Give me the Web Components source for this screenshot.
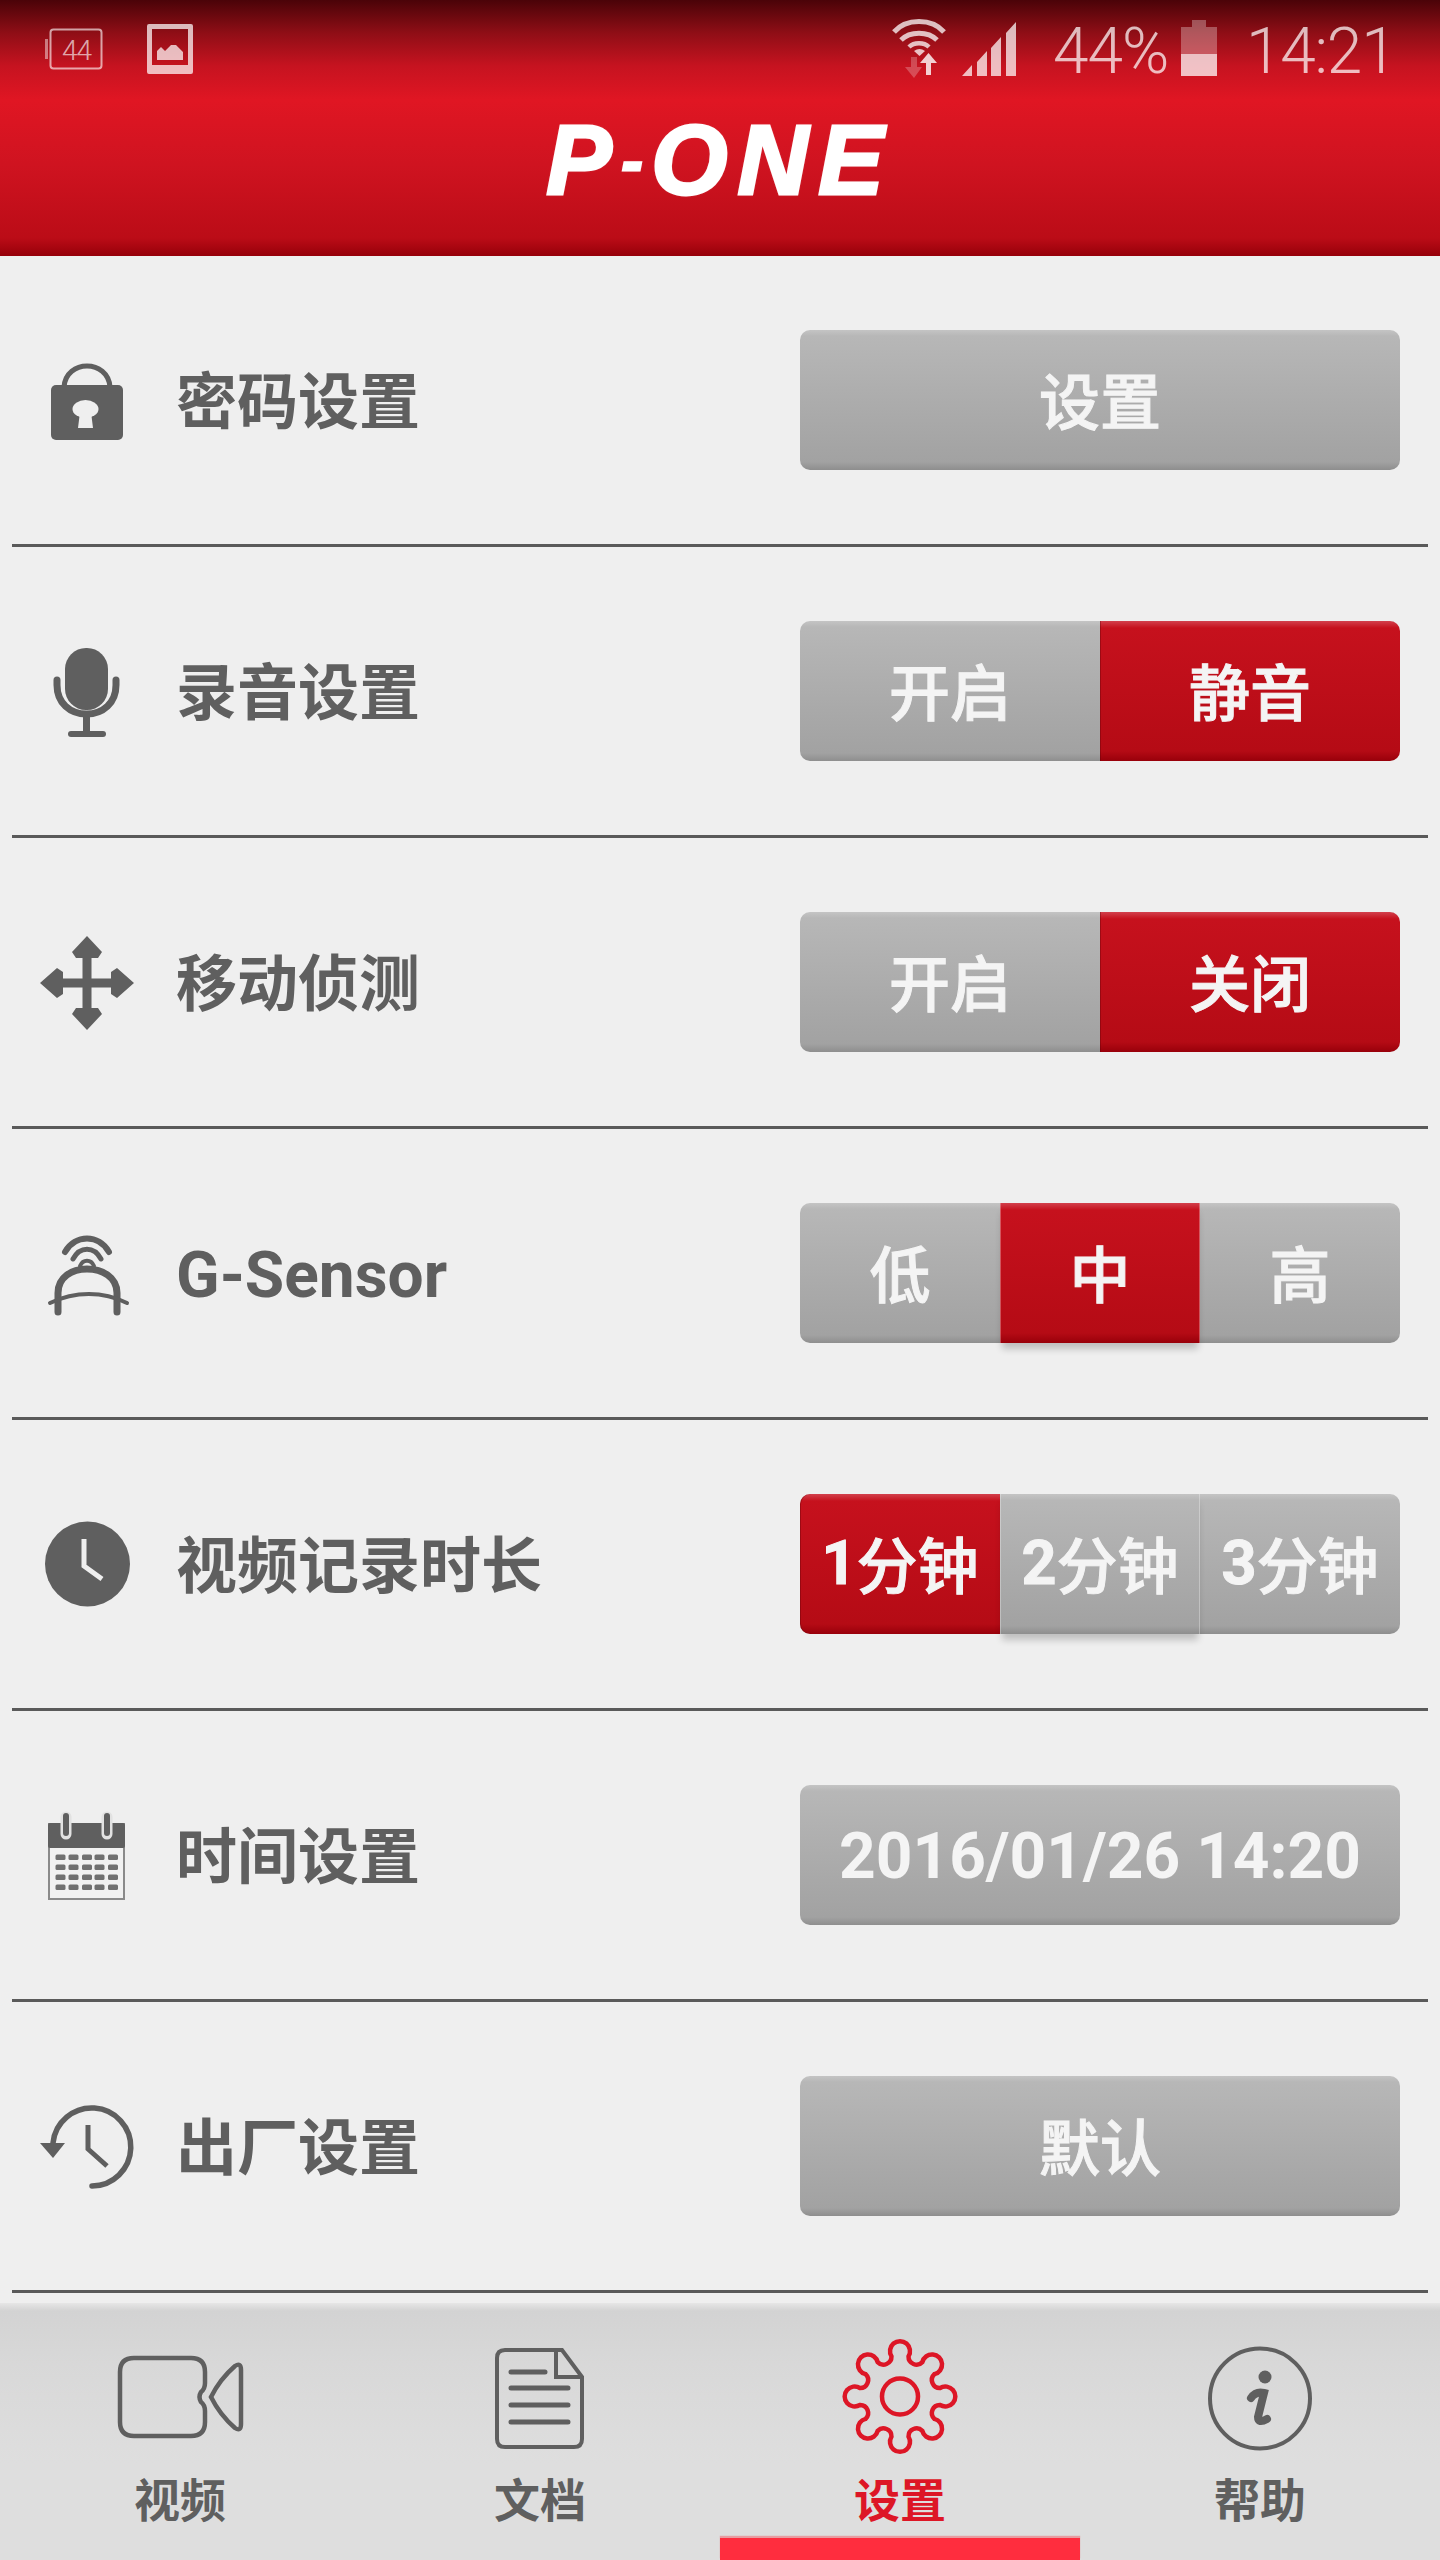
<!DOCTYPE html>
<html lang="zh">
<head>
<meta charset="utf-8">
<title>P-ONE</title>
<style>
  html, body { margin: 0; padding: 0; background: #efefef; }
</style>
</head>
<body>
<p-app>
  <p-header slot="header"></p-header>
  <setting-row slot="rows" icon="lock">
    <span slot="label">密码设置</span>
    <seg-control slot="control"><seg-btn plain>设置</seg-btn></seg-control>
  </setting-row>
  <setting-row slot="rows" icon="mic">
    <span slot="label">录音设置</span>
    <seg-control slot="control"><seg-btn>开启</seg-btn><seg-btn on>静音</seg-btn></seg-control>
  </setting-row>
  <setting-row slot="rows" icon="move">
    <span slot="label">移动侦测</span>
    <seg-control slot="control"><seg-btn>开启</seg-btn><seg-btn on>关闭</seg-btn></seg-control>
  </setting-row>
  <setting-row slot="rows" icon="gsensor">
    <span slot="label" class="latin">G-Sensor</span>
    <seg-control slot="control"><seg-btn>低</seg-btn><seg-btn on raised>中</seg-btn><seg-btn>高</seg-btn></seg-control>
  </setting-row>
  <setting-row slot="rows" icon="clock">
    <span slot="label">视频记录时长</span>
    <seg-control slot="control"><seg-btn on><b>1</b>分钟</seg-btn><seg-btn raised><b>2</b>分钟</seg-btn><seg-btn><b>3</b>分钟</seg-btn></seg-control>
  </setting-row>
  <setting-row slot="rows" icon="calendar">
    <span slot="label">时间设置</span>
    <seg-control slot="control"><seg-btn plain big>2016/01/26 14:20</seg-btn></seg-control>
  </setting-row>
  <setting-row slot="rows" icon="history">
    <span slot="label">出厂设置</span>
    <seg-control slot="control"><seg-btn plain>默认</seg-btn></seg-control>
  </setting-row>
  <tab-bar slot="tabs">
    <tab-item icon="video">视频</tab-item>
    <tab-item icon="doc">文档</tab-item>
    <tab-item icon="gear" active>设置</tab-item>
    <tab-item icon="info">帮助</tab-item>
  </tab-bar>
</p-app>

<script>
'use strict'
const FONT = `Roboto, "Noto Sans CJK SC", sans-serif`
const GREY = '#5f5f5f'
const BG = '#efefef'
const RED = '#dd1626'

// 8 lobes, arcs out and back in around the centre
function gearPath(cx, cy){
    const r = 41, half = 12
    const pt = deg => {
        const a = (deg - 90) * Math.PI / 180
        return (cx + r * Math.cos(a)).toFixed(2) + ' ' + (cy + r * Math.sin(a)).toFixed(2)
    }
    let d = 'M' + pt(-half)
    for(let i = 0; i < 8; i++){
        const a = i * 45
        d += ' A10 10 0 1 1 ' + pt(a + half)
        d += ' A8 8 0 0 0 ' + pt(a + 45 - half)
    }
    return d + ' Z'
}

function calendarCells(){
    let out = ''
    for(const y of [69.500, 79.500, 89.500, 99.500]){
        for(const x of [55.500, 68.500, 82, 94.500, 108]){
            out += `<rect x="${x}" y="${y}" width="10" height="5.500" rx="1.500"/>`
        }
    }
    return out
}

const ROW_ICONS = {
    lock: `<path d="M64 57C66 29 108 29 110 57" fill="none" stroke="${GREY}" stroke-width="5"/>
        <rect x="51" y="55" width="72" height="55" rx="5" fill="${GREY}"/>
        <ellipse cx="85.500" cy="79" rx="13" ry="9" fill="${BG}"/>
        <path d="M80 82H91L93 98H78Z" fill="${BG}"/>`,
    mic: `<rect x="65" y="27" width="43" height="62" rx="21" fill="${GREY}"/>
        <path d="M57 59V64C57 82 70 93 86.500 93C103 93 116 82 116 64V59M86.500 93V112" fill="none" stroke="${GREY}" stroke-width="7" stroke-linecap="round"/>
        <rect x="68" y="110" width="38" height="6" rx="3" fill="${GREY}"/>`,
    move: `<path d="M87 40V102M58 71H116" stroke="${GREY}" stroke-width="9"/>
        <path d="M87 24L102 40L98 46H76L72 40ZM87 118L102 102L98 96H76L72 102ZM40 71L57 56L63 60V82L57 86ZM134 71L117 56L111 60V82L117 86Z" fill="${GREY}"/>`,
    gsensor: `<g fill="none" stroke="${GREY}" stroke-linecap="round">
        <path d="M65 49C75 31 99 31 109 49" stroke-width="6"/>
        <path d="M73 56C80 43 94 43 101 56" stroke-width="5"/>
        <path d="M80 63C83 56 91 56 94 63" stroke-width="4"/>
        <path d="M58 109V90C58 74 72 66 87 66C102 66 117 74 117 90V109" stroke-width="7"/>
        <path d="M50 100C75 88 103 88 127 100" stroke-width="4"/></g>`,
    clock: `<circle cx="87.500" cy="70" r="42.500" fill="${GREY}"/>
        <path d="M84 45V72L102 85" fill="none" stroke="${BG}" stroke-width="5"/>`,
    calendar: `<rect x="49" y="39" width="75" height="75" fill="#f1f1f1" stroke="#8a8a8a" stroke-width="2"/>
        <rect x="48" y="38" width="77" height="25" rx="2" fill="${GREY}"/>
        <path d="M66 32V49M107 32V49" stroke="#e2e2e2" stroke-width="11" stroke-linecap="round"/>
        <path d="M66 31V48M107 31V48" stroke="${GREY}" stroke-width="6" stroke-linecap="round"/>
        <g fill="#707070">${calendarCells()}</g>`,
    history: `<path d="M92 110A39 39 0 1 0 53 67" fill="none" stroke="${GREY}" stroke-width="5.500" stroke-linecap="round"/>
        <path d="M40 67H65L53 82Z" fill="${GREY}"/>
        <path d="M88 49V73L107 90" fill="none" stroke="${GREY}" stroke-width="5"/>`
}

const TAB_ICONS = {
    video: `<g fill="none" stroke="currentColor" stroke-width="4.500">
        <path d="M24 23H81Q95 23 95 37V48Q95 54 91 57Q88 62 91 67Q95 70 95 76V87Q95 101 81 101H24Q10 101 10 87V37Q10 23 24 23Z"/>
        <path d="M101 62Q110 44 125 31Q131 27 131 35V89Q131 97 125 93Q110 80 101 62Z"/></g>`,
    doc: `<g fill="none" stroke="currentColor" stroke-width="4">
        <path d="M35 15H92L112 42V104Q112 112 104 112H35Q27 112 27 104V23Q27 15 35 15Z"/>
        <path d="M86 16V42H112"/>
        <path d="M41 37H75M41 53H98M41 70H98M41 87H98" stroke-width="5" stroke-linecap="round"/></g>`,
    gear: `<g fill="none" stroke="currentColor" stroke-width="4.500">
        <path d="${gearPath(70, 61.5)}"/><circle cx="70" cy="61.500" r="18"/></g>`,
    info: `<circle cx="70" cy="63.500" r="50" fill="none" stroke="currentColor" stroke-width="4"/>
        <circle cx="75" cy="42" r="6.500" fill="currentColor"/>
        <path d="M61 63Q66 56 74 58L68 82Q68 89 77 84" fill="none" stroke="currentColor" stroke-width="8" stroke-linecap="round"/>`
}

class PApp extends HTMLElement {
    constructor(){
        super()
        this.attachShadow({mode:'open'})
        this.shadowRoot.innerHTML = `
        <style>
            :host { display:flex; flex-direction:column; width:1440px; height:2560px; overflow:hidden; background:${BG}; font-family:${FONT}; }
            .rows { display:flex; flex-direction:column; }
            .tabs { margin-top:10px; }
        </style>
        <slot name="header"></slot>
        <div class="rows"><slot name="rows"></slot></div>
        <div class="tabs"><slot name="tabs"></slot></div>`
    }
}

class PHeader extends HTMLElement {
    constructor(){
        super()
        this.attachShadow({mode:'open'})
        const dim = 'rgba(255,255,255,.72)'
        this.shadowRoot.innerHTML = `
        <style>
            :host { display:block; height:256px; background:linear-gradient(180deg,#4a0308 0,#8f0e16 33px,#c61320 66px,#e01623 100px,#cf1320 165px,#bb0c17 238px,#960009 256px); color:#fff; }
            .status { display:flex; height:90px; color:${dim}; font-family:Roboto, sans-serif; font-weight:300; font-size:64px; }
            .status svg { display:block; height:90px; flex:none; }
            .status span { display:block; line-height:90px; padding-top:7px; height:83px; white-space:nowrap; }
            .pct { width:115px; letter-spacing:-1px; }
            .time { width:142px; letter-spacing:-1.2px; margin-left:-2px; margin-right:52px; }
            .grow { flex:1; }
            .logo { height:166px; display:flex; justify-content:center; font:italic 700 98px/1 "Liberation Sans", sans-serif; letter-spacing:10px; padding-top:21px; box-sizing:border-box; -webkit-text-stroke:3px #fff; text-shadow:0 0 3px rgba(255,255,255,.45); }
            .logo b { font-size:62px; font-weight:700; letter-spacing:9px; align-self:flex-start; line-height:100px; }
        </style>
        <div class="status">
            <svg viewBox="0 0 200 90" width="200" fill="${dim}">
                <rect x="50.500" y="29.500" width="51" height="39" rx="3" fill="none" stroke="rgba(255,255,255,.62)" stroke-width="2"/>
                <rect x="45" y="39" width="3" height="20" fill="rgba(255,255,255,.45)"/>
                <text x="76.500" y="60" text-anchor="middle" font-family="Roboto" font-weight="300" font-size="28" letter-spacing="-1" fill="rgba(255,255,255,.65)">44</text>
                <path fill-rule="evenodd" d="M149 24H191Q193 24 193 26V72Q193 74 191 74H149Q147 74 147 72V26Q147 24 149 24ZM152 29V65H188V29Z"/>
                <path d="M157 60V51L161 47L165 51L171 45L176 45L183 52V60Z"/>
            </svg>
            <div class="grow"></div>
            <svg viewBox="885 0 168 90" width="168">
                <g fill="none" stroke="rgba(255,255,255,.74)">
                    <path d="M894 32C906 18 932 18 944 32" stroke-width="5"/>
                    <path d="M901 40C910 31 928 31 937 40" stroke-width="5"/>
                    <path d="M909 47C914 42 924 42 929 47" stroke-width="4.500"/>
                </g>
                <path d="M914 51Q919.500 47 925 51L919.500 56Z" fill="rgba(255,255,255,.74)"/>
                <path d="M911 57H917V67H922L914 78L905 67H911Z" fill="rgba(255,255,255,.24)"/>
                <path d="M928.500 53L937 63H931V75H926V63H920Z" fill="rgba(255,255,255,.8)"/>
                <path d="M962 76L972 65V76ZM977 62L987 51V76H977ZM991 48L1001 37V76H991ZM1006 33L1016 22V76H1006Z" fill="${dim}"/>
            </svg>
            <span class="pct">44%</span>
            <svg viewBox="1168 0 80 90" width="80">
                <path d="M1192 20H1206V27H1217V54H1181V27H1192Z" fill="rgba(255,255,255,.3)"/>
                <rect x="1181" y="54" width="36" height="22" fill="rgba(255,255,255,.74)"/>
            </svg>
            <span class="time">14:21</span>
        </div>
        <div class="logo">P<b>-</b>ONE</div>`
    }
}

class SettingRow extends HTMLElement {
    constructor(){
        super()
        this.attachShadow({mode:'open'})
        const icon = ROW_ICONS[this.getAttribute('icon')] || ''
        this.shadowRoot.innerHTML = `
        <style>
            :host { display:flex; align-items:center; height:291px; box-sizing:border-box; margin:0 12px; padding:74px 28px 74px 0; border-bottom:3px solid #5a5a5a; }
            svg { display:block; flex:none; width:164px; height:140px; filter:blur(.5px); }
            .label { flex:1; color:${GREY}; font-size:61px; font-weight:700; line-height:134px; padding-top:6px; white-space:nowrap; }
            ::slotted(.latin) { font-size:64px; }
        </style>
        <svg viewBox="12 0 164 140">${icon}</svg>
        <div class="label"><slot name="label"></slot></div>
        <slot name="control"></slot>`
    }
}

class SegControl extends HTMLElement {
    constructor(){
        super()
        this.attachShadow({mode:'open'})
        this.shadowRoot.innerHTML = `
        <style>
            :host { display:flex; width:600px; height:140px; flex:none; }
            ::slotted(seg-btn:first-child) { border-radius:10px 0 0 10px; }
            ::slotted(seg-btn:last-child) { border-radius:0 10px 10px 0; }
            ::slotted(seg-btn:only-child) { border-radius:10px; }
        </style>
        <slot></slot>`
    }
}

class SegBtn extends HTMLElement {
    constructor(){
        super()
        this.attachShadow({mode:'open'})
        this.shadowRoot.innerHTML = `
        <style>
            :host { flex:1 1 0; display:flex; align-items:center; justify-content:center; box-sizing:border-box; height:140px; padding-bottom:3px; color:#f4f4f4; font-family:${FONT}; font-size:61px; font-weight:500; -webkit-text-stroke:1px #f4f4f4; white-space:nowrap;
                background:linear-gradient(180deg,#c4c4c4 0,#b7b7b7 6px,#a2a2a2 132px,#8e8e8e 140px); }
            :host([on]) { background:linear-gradient(180deg,#d2404c 0,#c6111d 7px,#b50b15 130px,#98000a 140px); box-shadow:inset 1px 0 0 rgba(90,0,5,.35); }
            :host([raised]) { position:relative; box-shadow:0 8px 7px -2px rgba(0,0,0,.2), inset 1px 0 0 rgba(255,255,255,.3), inset -1px 0 0 rgba(255,255,255,.3); }
            :host([big]) { font-size:64px; font-weight:700; -webkit-text-stroke:0; padding-bottom:0; padding-top:2px; }
        </style>
        <slot></slot>`
    }
}

class TabBar extends HTMLElement {
    constructor(){
        super()
        this.attachShadow({mode:'open'})
        this.shadowRoot.innerHTML = `
        <style>
            :host { display:flex; height:257px; background:linear-gradient(180deg,#e6e6e6 0,#d3d3d3 8px,#d8d8d8 60px,#dedede 160px,#dedede 257px); }
        </style>
        <slot></slot>`
    }
}

class TabItem extends HTMLElement {
    constructor(){
        super()
        this.attachShadow({mode:'open'})
        const icon = TAB_ICONS[this.getAttribute('icon')] || ''
        this.shadowRoot.innerHTML = `
        <style>
            :host { flex:1 1 0; display:flex; flex-direction:column; align-items:center; padding-top:32px; box-sizing:border-box; color:${GREY}; font-family:${FONT}; font-size:46px; font-weight:700; }
            :host([active]) { color:${RED}; }
            svg { display:block; width:140px; height:130px; flex:none; filter:blur(.4px); }
            .name { line-height:68px; padding-top:2px; }
            .bar { margin-top:auto; align-self:stretch; height:22px; }
            :host([active]) .bar { background:#ff2d3e; box-shadow:0 -2px 1px rgba(240,90,100,.5); }
        </style>
        <svg viewBox="0 0 140 130">${icon}</svg>
        <div class="name"><slot></slot></div>
        <div class="bar"></div>`
    }
}

window.customElements.define('p-app', PApp)
window.customElements.define('p-header', PHeader)
window.customElements.define('setting-row', SettingRow)
window.customElements.define('seg-control', SegControl)
window.customElements.define('seg-btn', SegBtn)
window.customElements.define('tab-bar', TabBar)
window.customElements.define('tab-item', TabItem)
</script>
</body>
</html>
